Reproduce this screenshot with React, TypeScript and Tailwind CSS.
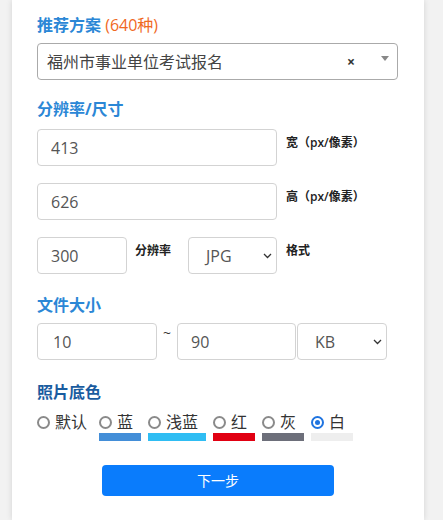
import { useState } from "react";

const FONT = { fontFamily: '"Open Sans", "Noto Sans CJK SC", sans-serif' };

const colors = [
  { key: "default", label: "默认", swatch: null, w: "w-[55px]" },
  { key: "blue", label: "蓝", swatch: "bg-[#438ed8]", w: "w-[42px]" },
  { key: "lightblue", label: "浅蓝", swatch: "bg-[#2fbdf3]", w: "w-[58px]" },
  { key: "red", label: "红", swatch: "bg-[#e10012]", w: "w-[42px]" },
  { key: "gray", label: "灰", swatch: "bg-[#6d6f7a]", w: "w-[42px]" },
  { key: "white", label: "白", swatch: "bg-[#eeeeee]", w: "w-[42px]" },
];

function Chevron() {
  return (
    <svg width="9" height="6" viewBox="0 0 9 6" fill="none" stroke="#333" strokeWidth="1.3">
      <path d="M1 1l3.5 3.5L8 1" />
    </svg>
  );
}

function Heading({ children, className = "" }: { children: React.ReactNode; className?: string }) {
  return (
    <div className={`text-[16px] leading-[24px] font-bold text-[#2b87d6] ${className}`}>{children}</div>
  );
}

function Field({ value, className }: { value: string; className: string }) {
  return (
    <input
      readOnly
      value={value}
      className={`h-[37px] rounded-[4px] border border-[#d3d3d3] bg-white pl-[13px] text-[16px] text-[#555] outline-none ${className}`}
    />
  );
}

function Select({ value, className }: { value: string; className: string }) {
  return (
    <div
      className={`h-[37px] rounded-[4px] border border-[#d3d3d3] bg-white flex items-center justify-between pl-[17px] pr-[4px] text-[16px] text-[#555] ${className}`}
    >
      <span>{value}</span>
      <Chevron />
    </div>
  );
}

function Hint({ children }: { children: React.ReactNode }) {
  return <div className="text-[12px] leading-[16px] font-semibold text-[#222] pt-[6px]">{children}</div>;
}

export default function App() {
  const [bg, setBg] = useState("white");

  return (
    <div className="min-h-[520px] bg-[#f2f2f2]" style={FONT}>
      <div className="ml-[12px] w-[412px] min-h-[520px] bg-white shadow-[0_0_6px_rgba(0,0,0,0.13)] pl-[25px] pt-[13px]">
        <Heading>
          推荐方案 <span className="font-normal text-[#f0691f]">(640种)</span>
        </Heading>

        {/* 方案选择 */}
        <div className="mt-[6px] w-[361px] h-[37px] rounded-[4px] border border-[#aaa] flex items-center pl-[9px] pr-[8px] text-[16px] text-[#444]">
          <span className="flex-1">福州市事业单位考试报名</span>
          <span className="text-[14px] font-bold text-[#333] mr-[26px]">×</span>
          <svg width="8" height="5" viewBox="0 0 8 5" className="mb-[6px]">
            <path d="M0 0h8L4 5z" fill="#888" />
          </svg>
        </div>

        <Heading className="mt-[17px]">分辨率/尺寸</Heading>

        <div className="mt-[8px] flex flex-col gap-[17px]">
          <div className="flex gap-[9px]">
            <Field value="413" className="w-[240px]" />
            <Hint>宽（px/像素）</Hint>
          </div>
          <div className="flex gap-[9px]">
            <Field value="626" className="w-[240px]" />
            <Hint>高（px/像素）</Hint>
          </div>
          <div className="flex">
            <Field value="300" className="w-[90px]" />
            <div className="ml-[8px] w-[53px]">
              <Hint>分辨率</Hint>
            </div>
            <Select value="JPG" className="w-[89px]" />
            <div className="ml-[9px]">
              <Hint>格式</Hint>
            </div>
          </div>
        </div>

        <Heading className="mt-[19px]">文件大小</Heading>

        <div className="mt-[6px] flex items-start">
          <Field value="10" className="w-[120px] pl-[15px]" />
          <span className="w-[20px] pl-[6px] text-[14px] leading-[20px] text-[#333]">~</span>
          <Field value="90" className="w-[119px]" />
          <Select value="KB" className="ml-[1px] w-[90px]" />
        </div>

        <div className="mt-[20px] text-[16px] leading-[24px] font-bold text-[#1a5c9f]">照片底色</div>

        {/* 底色选项 */}
        <div className="mt-[8px] flex gap-[7px]">
          {colors.map((c) => {
            const on = bg === c.key;
            return (
              <button key={c.key} type="button" onClick={() => setBg(c.key)} className={`flex flex-col ${c.w}`}>
                <span className="flex items-center gap-[5px] h-[20px] text-[16px] text-[#333]">
                  <span
                    className={`w-[13px] h-[13px] rounded-full border-2 flex items-center justify-center ${
                      on ? "border-[#1f74e0]" : "border-[#8a8a8a]"
                    }`}
                  >
                    {on && <span className="w-[5px] h-[5px] rounded-full bg-[#1f74e0]" />}
                  </span>
                  {c.label}
                </span>
                {c.swatch && <span className={`mt-[1px] h-[8px] w-full ${c.swatch}`} />}
              </button>
            );
          })}
        </div>

        <button
          type="button"
          className="mt-[24px] ml-[65px] w-[232px] h-[31px] rounded-[4px] bg-[#0a7cfc] text-white text-[14px]"
        >
          下一步
        </button>
      </div>
    </div>
  );
}
